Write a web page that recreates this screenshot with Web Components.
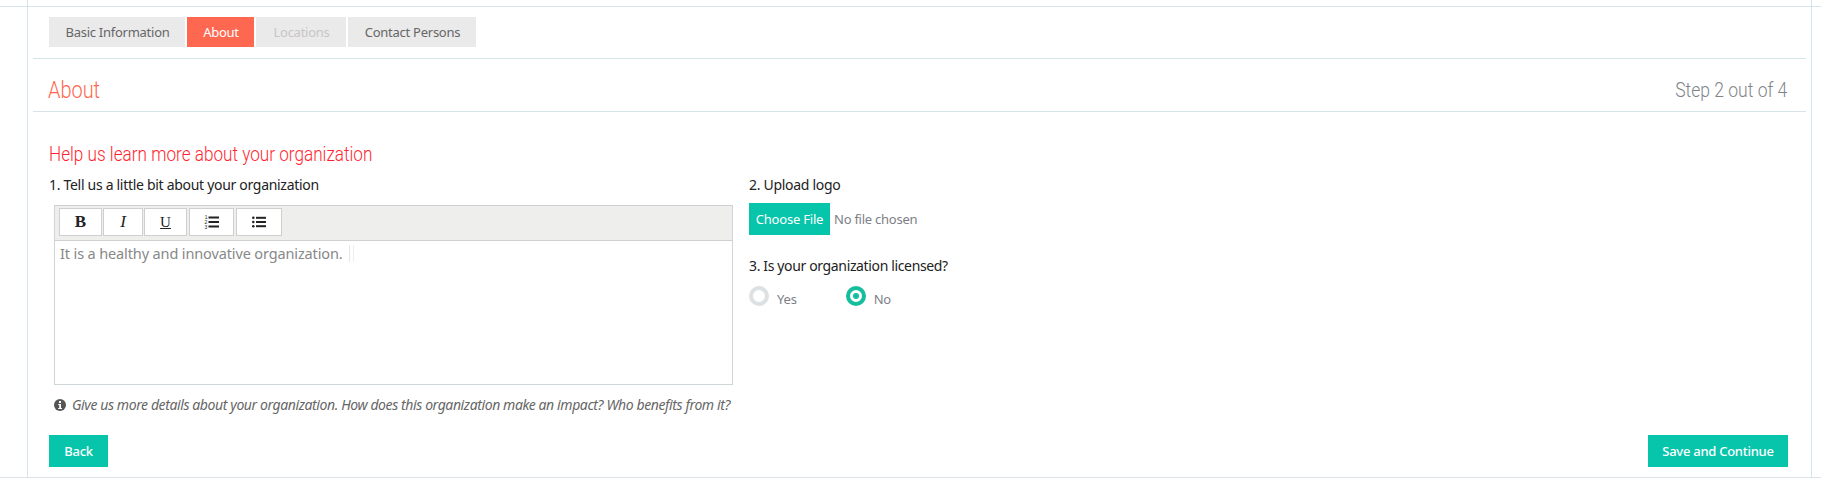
<!DOCTYPE html>
<html lang="en"><head><meta charset="utf-8"><title>About</title>
<style>
html,body{margin:0;padding:0;background:#fff}
body{font-family:"Noto Sans","Open Sans",sans-serif;font-size:13px;color:#333;overflow:hidden}
</style></head><body>
<app-page>
  <step-tabs>
    <step-tab style="--w:136px">Basic Information</step-tab>
    <step-tab style="--w:67px" state="active">About</step-tab>
    <step-tab style="--w:90px" state="disabled">Locations</step-tab>
    <step-tab style="--w:128px">Contact Persons</step-tab>
  </step-tabs>
  <section-head title="About" step="Step 2 out of 4"></section-head>
  <about-form></about-form>
</app-page>
<script>
function def(name,html,setup){
  customElements.define(name,class extends HTMLElement{
    constructor(){super();this.attachShadow({mode:'open'}).innerHTML=html;}
    connectedCallback(){if(setup)setup(this);}
  });
}
const NARROW='Roboto,"Liberation Sans",sans-serif';
def('app-page',`<style>
:host{display:block;box-sizing:border-box;width:1821px;height:478px;padding:7px 9px 0 27px;border-bottom:1px solid #dbe3e8;
background:linear-gradient(#d5e3ea,#d5e3ea) 0 6px/100% 1px no-repeat}
.inner{box-sizing:border-box;height:477px;margin-top:-7px;padding-top:7px;border-left:1px solid #d5e3ea;border-right:1px solid #d5e3ea}
</style><div class="inner"><slot></slot></div>`);
def('step-tabs',`<style>:host{display:flex;gap:2px;margin:10px 0 0 21px;height:30px}</style><slot></slot>`);
def('step-tab',`<style>:host{display:flex;align-items:center;justify-content:center;box-sizing:border-box;width:var(--w);padding-left:1px;background:#eaeaea;color:#666;font-size:13px;letter-spacing:-.26px}
:host([state=active]){background:#ff6850;color:#fff}
:host([state=disabled]){color:#c9c5c5}</style><slot></slot>`);
def('section-head',`<style>:host{display:flex;justify-content:space-between;align-items:center;box-sizing:border-box;height:54px;margin:11px 5px 0;padding:9px 19px 0 15px;
border-top:1px solid #d5e3ea;border-bottom:1px solid #d5e3ea;font-family:${NARROW};font-weight:300}
.t{display:inline-block;font-size:24px;color:#ff6850;transform:scaleX(.83);transform-origin:0 50%}
.s{display:inline-block;font-size:21px;color:#7f8489;transform:scaleX(.835);transform-origin:100% 50%}</style><span class="t"></span><span class="s"></span>`,
el=>{el.shadowRoot.querySelector('.t').textContent=el.getAttribute('title');el.shadowRoot.querySelector('.s').textContent=el.getAttribute('step');});
def('field-label',`<style>:host{display:block;color:#222;font-size:14px;line-height:18px;letter-spacing:-.3px}:host(.tight){letter-spacing:-.36px}</style><slot></slot>`);
def('rich-editor',`<style>:host{display:block;box-sizing:border-box;width:679px;height:180px;margin:11px 0 0 5px;border:1px solid #cfd6d9;border-top-color:#d0d0d0}
.bar{display:flex;gap:1px;box-sizing:border-box;height:35px;padding:2px 4px;background:#eeeeec;border-bottom:1px solid #d0d0d0}
button{box-sizing:border-box;height:28px;padding:0;margin:0;background:#fff;border:1px solid #cfcfcf;display:flex;align-items:center;justify-content:center;
font:17px "Liberation Serif",serif;color:#222}
.text{padding:2px 5px;font-size:14.5px;line-height:20px;color:#888;letter-spacing:-.13px;display:flex;align-items:center;height:20px}
.caret{display:inline-block;width:3px;height:17px;border:1px solid #eee;border-left-color:#e6e6e6;margin-left:6px;border-top:0;border-bottom:0}
</style>
<div class="bar">
<button style="width:43px;font-weight:700">B</button>
<button style="width:40px;font-style:italic">I</button>
<button style="width:43px;text-decoration:underline;font-size:15px">U</button>
<button style="width:45px;margin-left:1px"><svg width="15" height="14" viewBox="0 0 15 14" fill="#222"><rect x="4.5" y="1.5" width="10.5" height="2"/><rect x="4.5" y="6" width="10.5" height="2"/><rect x="4.5" y="10.5" width="10.5" height="2"/><g font-family="Liberation Sans" font-size="5"><text x="0.8" y="4.2">1</text><text x="0.5" y="8.8">2</text><text x="0.5" y="13.6">3</text></g></svg></button>
<button style="width:46px;margin-left:1px"><svg width="14" height="12" viewBox="0 0 14 12" fill="#222"><rect x="4" y="0.8" width="10" height="2"/><rect x="4" y="5" width="10" height="2"/><rect x="4" y="9.2" width="10" height="2"/><circle cx="1.3" cy="1.8" r="1.3"/><circle cx="1.3" cy="6" r="1.3"/><circle cx="1.3" cy="10.2" r="1.3"/></svg></button>
</div>
<div class="text"><slot></slot><span class="caret"></span></div>`);
def('hint-note',`<style>:host{display:flex;align-items:center;gap:6px;margin:11px 0 0 5px;color:#666;font-size:14px;font-style:italic;line-height:18px;letter-spacing:-.4px;white-space:nowrap}
svg{flex:none}</style><svg width="12" height="12" viewBox="0 0 12 12"><circle cx="6" cy="6" r="6" fill="#555"/><rect x="5" y="2" width="2" height="2" fill="#fff"/><path d="M4.2 5h2.8v4h1v1H4.2V9h1V6h-1z" fill="#fff"/></svg><slot></slot>`);
def('file-field',`<style>:host{display:flex;align-items:center;gap:4px;margin-top:9px;color:#7d8087;font-size:13px;letter-spacing:-.25px}
.b{display:flex;align-items:center;justify-content:center;width:81px;height:32px;background:#07c5ab;color:#fff;letter-spacing:-.2px}</style><span class="b">Choose File</span><span>No file chosen</span>`);
def('radio-option',`<style>:host{display:flex;align-items:center;gap:8px;color:#7d8087;font-size:13px;letter-spacing:-.2px}
.r{box-sizing:border-box;width:20px;height:20px;border-radius:50%;border:4px solid #dde1e3;background:#fff;position:relative}
:host([checked]) .r{border-color:#15bd9f}
:host([checked]) .r::after{content:"";position:absolute;left:3px;top:3px;width:6px;height:6px;border-radius:50%;background:#15bd9f}
span.l{position:relative;top:3px}</style><span class="r"></span><span class="l"><slot></slot></span>`);
def('action-button',`<style>:host{display:flex;align-items:center;justify-content:center;box-sizing:border-box;height:32px;background:#07c5ab;color:#fff;font-size:13px;font-weight:500;letter-spacing:-.27px}</style><slot></slot>`);
def('about-form',`<style>:host{display:block;padding:0 0 0 21px;margin-right:23px}
h2{display:inline-block;margin:31px 0 0;font:300 21px/22px ${NARROW};color:#ff1f30;height:22px;transform:scaleX(.817);transform-origin:0 50%;white-space:nowrap;letter-spacing:0}
.cols{display:grid;grid-template-columns:700px 1fr;margin-top:11px}
.radios{display:flex;gap:49px;margin-top:11px}
.q3{margin-top:22px}
.actions{display:flex;justify-content:space-between;margin-top:21px}
action-button.back{width:59px}action-button.save{width:140px}
</style>
<h2>Help us learn more about your organization</h2>
<div class="cols">
<div><field-label>1. Tell us a little bit about your organization</field-label>
<rich-editor>It is a healthy and innovative organization.</rich-editor>
<hint-note>Give us more details about your organization. How does this organization make an impact? Who benefits from it?</hint-note></div>
<div><field-label>2. Upload logo</field-label><file-field></file-field>
<field-label class="q3 tight">3. Is your organization licensed?</field-label>
<div class="radios"><radio-option>Yes</radio-option><radio-option checked>No</radio-option></div></div>
</div>
<div class="actions"><action-button class="back">Back</action-button><action-button class="save">Save and Continue</action-button></div>`);
</script>
</body></html>
